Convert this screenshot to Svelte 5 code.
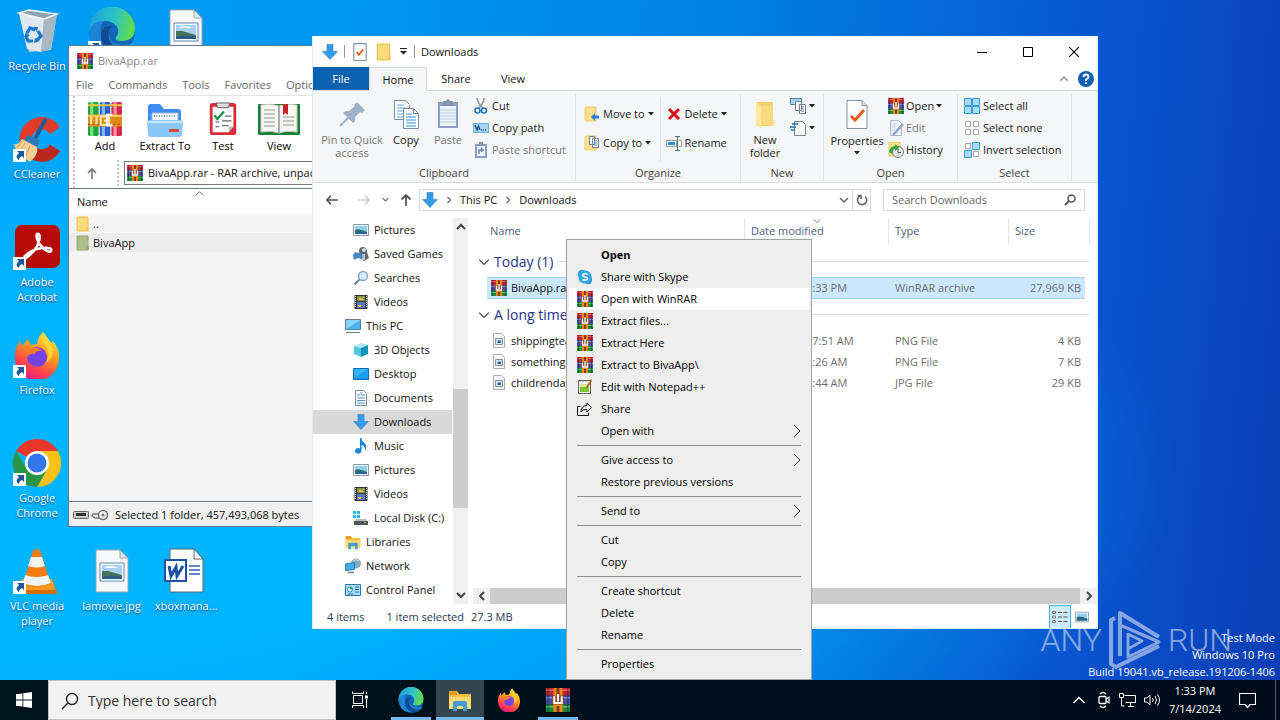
<script>
  const desktopIcons = [
    { icon: 'bin', label: 'Recycle Bin', col: 1, row: 1 },
    { icon: 'ccleaner', label: 'CCleaner', col: 1, row: 2, link: true },
    { icon: 'acrobat', label: 'Adobe Acrobat', col: 1, row: 3, link: true },
    { icon: 'firefox', label: 'Firefox', col: 1, row: 4, link: true },
    { icon: 'chrome', label: 'Google Chrome', col: 1, row: 5, link: true },
    { icon: 'vlc', label: 'VLC media player', col: 1, row: 6, link: true },
    { icon: 'edge', label: '', col: 2, row: 1, link: true },
    { icon: 'image', label: 'lamovie.jpg', col: 2, row: 6 },
    { icon: 'image', label: '', col: 3, row: 1 },
    { icon: 'word', label: 'xboxmana...', col: 3, row: 6 }
  ];
  const navItems = [
    ['pictures', 'Pictures', 1],
    ['games', 'Saved Games', 1],
    ['lens', 'Searches', 1],
    ['film', 'Videos', 1],
    ['pc', 'This PC', 0],
    ['cube', '3D Objects', 1],
    ['screen', 'Desktop', 1],
    ['doc', 'Documents', 1],
    ['down', 'Downloads', 1],
    ['music', 'Music', 1],
    ['pictures', 'Pictures', 1],
    ['film', 'Videos', 1],
    ['disk', 'Local Disk (C:)', 1],
    ['library', 'Libraries', 0],
    ['network', 'Network', 0],
    ['panel', 'Control Panel', 0]
  ];
  const oldFiles = [
    ['shippingteam.png', '10/15/2023 7:51 AM', 'PNG File', '4 KB'],
    ['somethingpage.png', '1/23/2024 2:26 AM', 'PNG File', '7 KB'],
    ['childrendays.jpg', '6/15/2024 3:44 AM', 'JPG File', '29 KB']
  ];
  const menu = [
    [
      { label: 'Open', bold: true },
      { label: 'Share with Skype', icon: 'skype' },
      { label: 'Open with WinRAR', icon: 'rar', hot: true },
      { label: 'Extract files...', icon: 'rar' },
      { label: 'Extract Here', icon: 'rar' },
      { label: 'Extract to BivaApp\\', icon: 'rar' },
      { label: 'Edit with Notepad++', icon: 'npp' },
      { label: 'Share', icon: 'share' },
      { label: 'Open with', sub: true }
    ],
    [{ label: 'Give access to', sub: true }, { label: 'Restore previous versions' }],
    [{ label: 'Send to', sub: true }],
    [{ label: 'Cut' }, { label: 'Copy' }],
    [{ label: 'Create shortcut' }, { label: 'Delete' }, { label: 'Rename' }],
    [{ label: 'Properties' }]
  ];
  const tasks = [
    { icon: 'edge', name: 'Microsoft Edge', size: 26, open: true },
    { icon: 'library', name: 'File Explorer', size: 24, open: true, active: true },
    { icon: 'firefox', name: 'Firefox', size: 24 },
    { icon: 'rar', name: 'WinRAR', size: 24, open: true }
  ];
</script>

{#snippet icon(name, size = 16)}
  {#if name === 'rar'}
    <svg width={size} height={size} viewBox="0 0 16 16" aria-hidden="true">
      <rect width="16" height="5" y="0" fill="#c2212f" /><rect width="16" height="1" y="1" fill="#f0606a" />
      <rect width="16" height="6" y="5" fill="#4450a8" /><rect width="16" height="1" y="6" fill="#7c8ce0" />
      <rect width="16" height="5" y="11" fill="#1d8a35" /><rect width="16" height="1" y="12" fill="#54c060" />
      <path d="M1 0h1v16H1zM14 0h1v16h-1z" fill="#2a2238" opacity=".5" />
      <rect x="5" width="6" height="16" fill="#e88a1c" /><path d="M7 0h2v5H7zM7 12h2v4H7z" fill="#8d3a10" />
      <rect x="4" y="5" width="8" height="6" fill="#8a4a2a" />
      <path d="M5.500 5.500v4.500h5V5.500M8 4v5" fill="none" stroke="#fff" stroke-width="1.300" />
    </svg>
  {:else if name === 'books'}
    <svg width={size} height={size} viewBox="0 0 32 32" aria-hidden="true">
      <rect x="0" width="10" height="32" rx="1.500" fill="#20a53a" /><rect x="2" width="3" height="32" fill="#79e084" />
      <rect x="11" width="10" height="32" rx="1.500" fill="#2a5fd0" /><rect x="13" width="3" height="32" fill="#82b4ff" />
      <rect x="22" width="10" height="32" rx="1.500" fill="#d22a4d" /><rect x="24" width="3" height="32" fill="#ff8ea0" />
      <path d="M0 2h10v2H0zM11 2h10v2H11zM22 2h10v2H22z" fill="#f5c93c" />
      <path d="M0 12h32v11H0z" fill="#e08a1a" /><path d="M0 12h32v2H0z" fill="#ffc95a" /><path d="M0 21h32" stroke="#96500b" stroke-dasharray="2 2" />
      <path d="M3 14v7M8 14v7" stroke="#fbe6a5" stroke-width="2" />
      <path d="M12 13.500h8v8h-8zM15 17.500h6" fill="none" stroke="#fbe6a5" stroke-width="2" /><path d="M23 12h-5v10h5" fill="none" stroke="#fff" stroke-width="2" />
    </svg>
  {:else if name === 'extract'}
    <svg width={size} height={size} viewBox="0 0 36 34" aria-hidden="true">
      <path d="M1 30V4q0-3 3-3h9l4 5h14q3 0 3 3v20z" fill="#3e8df2" />
      <path d="M5 10h26v12H5z" fill="#f5f8fc" stroke="#9eb6d4" /><path d="M7 13h22" stroke="#8499b5" stroke-width="2" stroke-dasharray="1 1.500" />
      <path d="M0 19q0-2 3-2h30q3 0 3 2l-1 12q0 3-3 3H4q-3 0-3-3z" fill="#8ac7fb" /><path d="M1 19h34" stroke="#c9e7ff" stroke-width="2" />
      <rect x="22" y="26" width="10" height="3" rx="1" fill="#e2442e" />
    </svg>
  {:else if name === 'test'}
    <svg width={size} height={size} viewBox="0 0 32 36" aria-hidden="true">
      <rect x="2" y="1" width="28" height="34" rx="3" fill="#d92d38" /><path d="M5 5h22v21l-5 6H5z" fill="#fff" />
      <path d="M27 26h-5v6z" fill="#b9bcc4" /><path d="M9 1h14l-1 5H10z" fill="#dcdde0" stroke="#55585e" />
      <path d="m7 14 3 4 7-8" fill="none" stroke="#16953c" stroke-width="2.500" />
      <path d="M18 15h7M8 21h4M15 20h10M8 26h4M15 25h7" stroke="#666b73" stroke-width="1.300" />
    </svg>
  {:else if name === 'book'}
    <svg width={size} height="34" viewBox="0 0 42 34" aria-hidden="true">
      <rect y="2" width="42" height="31" rx="1" fill="#15803c" /><path d="M3 3q10-2 18 1 8-3 18-1v27q-10-2-18 1-8-3-18-1z" fill="#f7f7f2" stroke="#c9c9c0" />
      <path d="M21 4v27" stroke="#aaa" stroke-width="2" />
      <path d="M6 8h11M6 12h11M6 16h11M6 20h11M6 24h11M25 15h11M25 19h11M25 23h11" stroke="#92958f" />
      <path d="M25 2h5v11l-2.500-2-2.500 2z" fill="#c9202d" />
    </svg>
  {:else if name === 'bin'}
    <svg width={size} height={size} viewBox="0 0 48 48" aria-hidden="true">
      <path d="m6 6 38 1-6 36-22 2z" fill="#c7d3dd" /><path d="m6 6 25 6-3 33-14-3z" fill="#dfe8ef" /><path d="m31 12 13-5-6 35-10 3z" fill="#a9b8c5" />
      <path d="m6 6 10-3 28 4-13 5z" fill="#8da2b2" stroke="#f4fafd" stroke-width="1.500" />
      <g fill="none" stroke="#1677cc" stroke-width="3.200"><path d="m14 26 3-5 5 2M25 24l3 5-4 4M20 34h-5l-2-5" /></g>
      <path d="M20 20h5l-1 5zM27 34l-6 2 1-5zM11 30l2-5 4 4z" fill="#1677cc" />
    </svg>
  {:else if name === 'ccleaner'}
    <svg width={size} height={size} viewBox="0 0 48 48" aria-hidden="true">
      <path d="M47 12A22 22 0 1 0 47 36L37 30A10 10 0 1 1 37 19z" fill="#e13b2b" /><path d="M47 36 37 30A10 10 0 0 1 24 33L18 44Q36 53 47 36z" fill="#b9271d" />
      <path d="m32 5-9 17" stroke="#1d5e98" stroke-width="4" stroke-linecap="round" />
      <path d="m15 20 12 5-4 9-14-7z" fill="#2e78b4" /><path d="m9 24 15 8q2 7-7 15L4 38l-3-9q5 1 8-5z" fill="#f6cf93" /><path d="m12 28-6 10M17 31l-5 12M9 26l-5 7" stroke="#d59c55" />
    </svg>
  {:else if name === 'acrobat'}
    <svg width={size} height={size} viewBox="0 0 48 48" aria-hidden="true">
      <rect x="2" y="2" width="45" height="43" rx="7" fill="#b60c05" />
      <path d="M24 11q4-1 2 7-2 9-13 17-3 1-1-2 5-6 17-8 11-1 9 3-2 2-7-2Q22 17 24 11z" fill="none" stroke="#fff" stroke-width="2.600" stroke-linejoin="round" />
    </svg>
  {:else if name === 'firefox'}
    <svg width={size} height={size} viewBox="0 0 48 48" aria-hidden="true">
      <defs><linearGradient id="fx" x1=".8" y1="0" x2=".3" y2="1"><stop offset="0" stop-color="#fff044" /><stop offset=".4" stop-color="#ff9a1f" /><stop offset=".75" stop-color="#ff4050" /><stop offset="1" stop-color="#e31587" /></linearGradient></defs>
      <path d="M30 1q4 5 8 11l2-2q7 9 6 18A22 22 0 0 1 2 27Q1 18 7 10l2 5 6-7 3 6 6-1q1-7 6-12z" fill="url(#fx)" />
      <circle cx="24" cy="26" r="10" fill="#7542e5" /><path d="M15 18q8-3 14 1-6 1-8 4-4-1-7 3z" fill="#ff7a20" /><path d="M30 1q-3 7 2 13 6 8 1 18 8-5 7-14-2-8-7-12z" fill="#ffd933" opacity=".85" />
    </svg>
  {:else if name === 'chrome'}
    <svg width={size} height={size} viewBox="0 0 48 48" aria-hidden="true">
      <path d="M24 24 3.200 12a24 24 0 0 1 41.600 0z" fill="#e8382b" /><path d="M24 24V12h20.800A24 24 0 0 1 24 48l10.400-18z" fill="#fdc215" /><path d="M24 24l10.400 6L24 48A24 24 0 0 1 3.200 12L13.600 30z" fill="#289645" />
      <circle cx="24" cy="24" r="12" fill="#fff" /><circle cx="24" cy="24" r="9.500" fill="#3477ea" />
    </svg>
  {:else if name === 'vlc'}
    <svg width={size} height={size} viewBox="0 0 48 48" aria-hidden="true">
      <path d="M9 32h30l5 14H4z" fill="#ff9a1b" /><path d="M5 43h38l1 4H4z" fill="#d96c00" />
      <path d="M20 4q4-4 7 0l11 33q-14 6-28 0z" fill="#f47b0c" /><path d="m18 10 11 0 3 9q-8 3-17 0zM12 28q12 4 23 0l3 8q-14 6-28 0z" fill="#f1f1f1" />
    </svg>
  {:else if name === 'edge'}
    <svg width={size} height={size} viewBox="0 0 48 48" aria-hidden="true">
      <defs><linearGradient id="eg" x1="0" y1=".3" x2="1" y2=".5"><stop offset="0" stop-color="#1b9de2" /><stop offset=".55" stop-color="#2fc5c4" /><stop offset="1" stop-color="#63dc45" /></linearGradient></defs>
      <circle cx="24" cy="24" r="23" fill="#1265b8" />
      <path d="M1 24A23 23 0 0 1 47 21q0 13-14 13-7 0-5-4 3-3 2-8-3-8-13-8-11 0-16 10z" fill="url(#eg)" />
      <path d="M1 24q4-11 16-10-6 4-4 15 3 13 16 18Q4 49 1 24z" fill="#1b84d4" /><path d="M25 19q-7 4-4 13 5 10 23 7-6 9-17 8-14-6-14-17 0-12 12-11z" fill="#0d4a91" />
      <path d="M21 25q-1 13 15 13 5 0 9-2 1 2-1 4-18 6-23-8z" fill="#30b4e8" opacity=".5" />
    </svg>
  {:else if name === 'image'}
    <svg width={size} height={size} viewBox="0 0 48 48" aria-hidden="true">
      <path d="M8 3h24l8 8v34H8z" fill="#f7f8f9" stroke="#9aa6ae" /><path d="M32 3v8h8z" fill="#dfe5e9" stroke="#9aa6ae" />
      <path d="M12 16h24v18H12z" fill="#fff" stroke="#5b86b4" /><path d="M14 18h20v14H14z" fill="#a8d2f4" /><path d="M14 24l6 0 14 4v4H14z" fill="#49725c" /><path d="M14 30q10-3 20 0v2H14z" fill="#2b5b86" /><path d="M16 21q6-4 14 0z" fill="#fff" />
    </svg>
  {:else if name === 'word'}
    <svg width={size} height={size} viewBox="0 0 48 48" aria-hidden="true">
      <path d="M8 2h24l9 10v33H8z" fill="#fff" stroke="#60656b" /><path d="M32 2v10h9" fill="none" stroke="#60656b" />
      <path d="M27 19h11M27 23h11M27 27h11" stroke="#2b5cb0" stroke-width="1.500" /><rect x="3" y="13" width="21" height="21" fill="#fff" stroke="#1e50a4" stroke-width="2" />
      <path d="m7 19 2 10 5-9 1 9 6-10" fill="none" stroke="#1e50a4" stroke-width="3" />
    </svg>
  {:else if name === 'folder'}
    <svg width={size} height={size} viewBox="0 0 16 16" aria-hidden="true"><path d="M2 1h11v14H2z" fill="#fbdc7c" stroke="#e9c14f" /><path d="M11 11h3v4h-3z" fill="#f3c95a" /></svg>
  {:else if name === 'folder-green'}
    <svg width={size} height={size} viewBox="0 0 16 16" aria-hidden="true"><path d="M2 1h11v14H2z" fill="#adbd8b" stroke="#96a878" /><path d="M11 11h3v4h-3z" fill="#9aae7a" /></svg>
  {:else if name === 'pictures'}
    <svg width={size} height={size} viewBox="0 0 16 16" aria-hidden="true"><path d="M.5 2.500h15v11H.5z" fill="#fff" stroke="#8b98a6" /><path d="M2 4h12v8H2z" fill="#8fd0f4" /><path d="M2 8q4-2 12 2v2H2z" fill="#356d7e" /><path d="M2 10h12v2H2z" fill="#2a62a0" /></svg>
  {:else if name === 'games'}
    <svg width={size} height={size} viewBox="0 0 16 16" aria-hidden="true"><path d="M6 5q0-4 4-4t4 5l2 6-5 3-4-3z" fill="#5d6b78" /><circle cx="11" cy="4" r="2" fill="#cfd7dd" /><path d="M0 9q2-5 5-2l3 0v6l-3-1-4 2z" fill="#418bc4" /><path d="M9 8h3v6H9z" fill="#b5bfc8" /></svg>
  {:else if name === 'lens'}
    <svg width={size} height={size} viewBox="0 0 16 16" aria-hidden="true"><circle cx="10" cy="6" r="4.500" fill="#d6efff" stroke="#7fa5c4" stroke-width="1.300" /><path d="m6.500 9.500-5 5" stroke="#5f86ab" stroke-width="2" /></svg>
  {:else if name === 'film'}
    <svg width={size} height={size} viewBox="0 0 16 16" aria-hidden="true"><path d="M1.500 1h13v14h-13z" fill="#34363a" /><path d="M4 2h8v5H4z" fill="#8a9444" /><path d="M4 8h8v6H4z" fill="#5c7ac0" /><path d="M6 4h4v2H6zM5 11h3v2H5z" fill="#e0c44a" /><path d="M2.500 2v12M13.500 2v12" stroke="#eee" stroke-dasharray="1 1" /></svg>
  {:else if name === 'pc'}
    <svg width={size} height={size} viewBox="0 0 16 16" aria-hidden="true"><path d="M.5 1.500h15v10H.5z" fill="#4bb8f5" stroke="#5a7d99" /><path d="m1 2 14 0L1 11z" fill="#8ad5fb" /><path d="M1 14.500h14" stroke="#6e7f8c" stroke-width="1" /></svg>
  {:else if name === 'cube'}
    <svg width={size} height={size} viewBox="0 0 16 16" aria-hidden="true"><path d="m1 4 7-3 7 2-7 3z" fill="#a7eaf5" /><path d="m1 4 7 2v9L1 12z" fill="#4dc8de" /><path d="m8 6 7-3v9l-7 3z" fill="#1494b3" /></svg>
  {:else if name === 'screen'}
    <svg width={size} height={size} viewBox="0 0 16 16" aria-hidden="true"><path d="M.5 2.500h15v11H.5z" fill="#1c9df0" stroke="#1068ae" /><path d="M1 3h14L1 12z" fill="#37b3fa" /></svg>
  {:else if name === 'doc'}
    <svg width={size} height={size} viewBox="0 0 16 16" aria-hidden="true"><path d="M2.500.5h8l3 3v12h-11z" fill="#fff" stroke="#78899a" /><path d="M4 5h3M4 8h8M4 10.500h8M4 13h8M8 5h4M7 3h2" stroke="#4a90c8" /></svg>
  {:else if name === 'down'}
    <svg width={size} height={size} viewBox="0 0 16 16" aria-hidden="true"><path d="M5 .5h6v7h4.500L8 15.500.5 7.500H5z" fill="#359be8" stroke="#2b7fc4" stroke-width=".6" /></svg>
  {:else if name === 'music'}
    <svg width={size} height={size} viewBox="0 0 16 16" aria-hidden="true"><path d="M7 0h1.500q0 3 3 5 3 3 1 8 0-5-4-6v6a3.300 2.800 0 1 1-1.500-2.500z" fill="#1689da" /></svg>
  {:else if name === 'disk'}
    <svg width={size} height={size} viewBox="0 0 16 16" aria-hidden="true"><path d="M0 1h3v3H0zM4 1h3v3H4zM0 5h3v3H0zM4 5h3v3H4z" fill="#27b5e0" /><path d="M3 9h10l2 3H1z" fill="#b9bfc4" /><path d="M1 11h14v4H1z" fill="#51575c" /><path d="M11 12h2v1h-2z" fill="#63e04b" /></svg>
  {:else if name === 'library'}
    <svg width={size} height={size} viewBox="0 0 24 24" aria-hidden="true"><path d="M1 20V4q0-1 1-1h7l2 3h12v14z" fill="#f6c03c" /><path d="M1 9h22v12H1z" fill="#fddb74" /><path d="M1 3.500h8V7H1z" fill="#e79a1f" /><path d="M5 23v-8q0-2 2-2h10q2 0 2 2v8h-4v-5H9v5z" fill="#3f9ad6" /></svg>
  {:else if name === 'network'}
    <svg width={size} height={size} viewBox="0 0 16 16" aria-hidden="true"><circle cx="11" cy="5.500" r="5" fill="#85a9c5" /><path d="M8 3q3-3 6 0" stroke="#dcebf5" fill="none" /><path d="m.5 6 9-1.500v7l-9 1z" fill="#3fb0f0" stroke="#3a78a6" /><path d="M3 14.500h6" stroke="#73838f" stroke-width="1.500" /></svg>
  {:else if name === 'panel'}
    <svg width={size} height={size} viewBox="0 0 16 16" aria-hidden="true"><path d="M.5 2.500h15v11H.5z" fill="#a9dcf8" stroke="#2878ae" /><circle cx="5" cy="7.500" r="2.500" fill="#fff" stroke="#2485c0" /><path d="M5 7.500V5a2.500 2.500 0 0 1 2.500 2.500z" fill="#2d9e50" /><path d="M10 5h4M10 7.500h4M10 10h4M3 12h5" stroke="#2574a8" /></svg>
  {:else if name === 'picfile'}
    <svg width={size} height={size} viewBox="0 0 16 16" aria-hidden="true"><path d="M2.500.5h8l3 3v11h-11z" fill="#fafbfc" stroke="#a3adb5" /><path d="M4.500 5.500h7v6h-7z" fill="#d7e8f6" stroke="#7c93a8" /><path d="M6.500 7.500h3.500v2.500H6.500z" fill="#3d6787" /></svg>
  {:else if name === 'skype'}
    <svg width={size} height={size} viewBox="0 0 16 16" aria-hidden="true"><circle cx="5" cy="5" r="4.200" fill="#35a5ea" /><circle cx="11" cy="11" r="4.200" fill="#2a95e0" /><circle cx="8" cy="8" r="6.600" fill="#35a5ea" /><path d="M10.500 5.500Q8 4 6 5.500q-1 2 2 2.500 3 .500 2.500 2-2 2-5 .500" fill="none" stroke="#fff" stroke-width="1.600" /></svg>
  {:else if name === 'npp'}
    <svg width={size} height={size} viewBox="0 0 16 16" aria-hidden="true"><path d="M1.500 1.500h12v13h-12z" fill="#f8faf2" stroke="#5d665a" /><path d="M3 8h9v5H3z" fill="#7fc62e" /><path d="M3 5h9v3H3z" fill="#cfe99a" /><path d="m14.500 1-5 8" stroke="#b5651d" stroke-width="1.800" /><path d="M3 1v2M6 1v2M9 1v2" stroke="#777" /></svg>
  {:else if name === 'share'}
    <svg width={size} height={size} viewBox="0 0 16 16" aria-hidden="true"><path d="M3.500 5.500h-3v9h11V12M4 11q0-6 6-6.500V2l4.500 4.500L10 11V8.500Q6 8 4 11z" fill="none" stroke="#111" /></svg>
  {:else if name === 'pin'}
    <svg width={size} height={size} viewBox="0 0 32 32" aria-hidden="true"><path d="m18 7 3-3 8 8-3 3-2-1-5 5q1 4-2 6l-10-10q3-3 6-2l6-5z" fill="#9eb2c6" /><path d="m12 20-8 8" stroke="#9eb2c6" stroke-width="2" /></svg>
  {:else if name === 'copy'}
    <svg width={size} height={size} viewBox="0 0 32 32" aria-hidden="true"><path d="M4.500 2.500h11l4 4v15h-15z" fill="#fff" stroke="#7c8da0" /><path d="M7 7h7M7 10h10M7 13h10M7 16h10M7 19h10" stroke="#5fa7e2" /><path d="M13.500 10.500h10l5 5v15h-15z" fill="#fff" stroke="#7c8da0" /><path d="M23.500 10.500v5h5" fill="none" stroke="#7c8da0" /><path d="M16 16h6M16 19h10M16 22h10M16 25h10M16 28h10" stroke="#2f8de0" /></svg>
  {:else if name === 'paste'}
    <svg width={size} height={size} viewBox="0 0 32 32" aria-hidden="true"><path d="M6 4h20v26H6z" fill="#8b9fc4" /><path d="M8 8h16v20H8z" fill="#eef4fb" /><path d="M8 12h16M8 15h16M8 18h16M8 21h16M8 24h16" stroke="#bccde4" /><path d="M11 3h3q2-4 4 0h3v5H11z" fill="#8494ac" /></svg>
  {:else if name === 'cut'}
    <svg width={size} height={size} viewBox="0 0 16 16" aria-hidden="true"><path d="M4 0q1 6 6 10M11 0q0 5-5 10" fill="none" stroke="#8b98a6" stroke-width="1.600" /><circle cx="4.500" cy="12.500" r="2.500" fill="none" stroke="#2176b8" stroke-width="1.600" /><circle cx="11" cy="12.500" r="2.500" fill="none" stroke="#2176b8" stroke-width="1.600" /></svg>
  {:else if name === 'copypath'}
    <svg width={size} height={size} viewBox="0 0 16 16" aria-hidden="true"><path d="M.5 3.500h15v9H.5z" fill="#a9d6f8" stroke="#6baede" /><path d="m2 5 2 5 1.500-4L7 10M8 10h1M10 10h1M12 10h1" fill="none" stroke="#12467a" stroke-width="1.300" /></svg>
  {:else if name === 'pasteshort'}
    <svg width={size} height={size} viewBox="0 0 16 16" aria-hidden="true"><path d="M2 2h12v14H2z" fill="#8b9fc4" /><path d="M4 4h8v10H4z" fill="#eef4fb" /><path d="M6 0h4v3H6z" fill="#8494ac" /><path d="M6 12V8h4M8 6l2 2-2 2" fill="none" stroke="#6f83aa" stroke-width="1.500" /></svg>
  {:else if name === 'moveto'}
    <svg width={size} height={size} viewBox="0 0 16 16" aria-hidden="true"><path d="M1 1h11v14H1z" fill="#fbdf8e" stroke="#eccb6c" /><path d="m7 11 4-4v2.500h4v3h-4V15z" fill="#2c7fdc" /></svg>
  {:else if name === 'copyto'}
    <svg width={size} height={size} viewBox="0 0 16 16" aria-hidden="true"><path d="M1 1h11v14H1z" fill="#fbdf8e" stroke="#eccb6c" /><path d="M5.500 1.500h5v8h-5zM8.500 3.500h6v9h-6z" fill="#fff" stroke="#6b7f96" /><path d="M10 6h3M10 8h3M10 10h3" stroke="#3c8edb" /></svg>
  {:else if name === 'delete'}
    <svg width={size} height={size} viewBox="0 0 16 16" aria-hidden="true"><path d="m3 3 10 10M13 3 3 13" stroke="#d8121d" stroke-width="3" /></svg>
  {:else if name === 'rename'}
    <svg width={size} height={size} viewBox="0 0 16 16" aria-hidden="true"><path d="M.5 5.500h10v6H.5zM13 5.500h2.500v6H13" fill="#fff" stroke="#8a99a8" /><path d="M2 7h7v3H2z" fill="#2f8ad6" /><path d="M9 1.500h5M9 15.500h5M11.500 2v13" stroke="#5b6873" /></svg>
  {:else if name === 'newfolder'}
    <svg width={size} height={size} viewBox="0 0 32 32" aria-hidden="true"><path d="M7 4h17v24H7z" fill="#f5d06d" /><path d="M7 4l5 4v22l-5-3zM24 22l2 1v5h-4z" fill="#fbe6a2" /><path d="M12 8h12v19H12z" fill="#f9da80" /></svg>
  {:else if name === 'newitem'}
    <svg width={size} height={size} viewBox="0 0 16 16" aria-hidden="true"><path d="M.5.5h11v6H.5z" fill="#a7d4f6" stroke="#56809f" /><path d="M5.500 3.500h6v9h-6zM9.500 6.500h6v9h-6z" fill="#f6f8fa" stroke="#76838f" /><path d="M11 9h3M11 11h3M11 13h3" stroke="#76838f" /></svg>
  {:else if name === 'easy'}
    <svg width={size} height={size} viewBox="0 0 16 16" aria-hidden="true"><path d="M4.500 1.500h8l3 3v11h-11z" fill="#f8fafb" stroke="#76838f" /><path d="M2 4h6M0 7h6M1 10h4" stroke="#1f6fb4" stroke-width="1.500" /></svg>
  {:else if name === 'check'}
    <svg width={size} height={size} viewBox="0 0 32 32" aria-hidden="true"><path d="M6 2.500h15l5 5v23H6z" fill="#fff" stroke="#8592a0" /><path d="M21 2.500v5h5" fill="#dbe2e8" stroke="#8592a0" /><path d="m10 18 4 4 9-10" fill="none" stroke="#ec5a1c" stroke-width="3" /></svg>
  {:else if name === 'checklist'}
    <svg width={size} height={size} viewBox="0 0 16 16" aria-hidden="true"><path d="M2.500.5h11v15h-11z" fill="#fff" stroke="#8592a0" /><path d="m5 8 2 2.500 4-5" fill="none" stroke="#ec5a1c" stroke-width="1.600" /></svg>
  {:else if name === 'edit'}
    <svg width={size} height={size} viewBox="0 0 16 16" aria-hidden="true"><path d="M2.500.5h8l3 3v12h-11z" fill="#eef3f9" stroke="#a6b6c8" /><path d="M4 4h5M4 7h4M4 10h3" stroke="#b9cbdd" /><path d="m15 4-8 9-2 2" stroke="#8ea6c2" stroke-width="2.500" /></svg>
  {:else if name === 'history'}
    <svg width={size} height={size} viewBox="0 0 16 16" aria-hidden="true"><path d="M1 0h11v14H1z" fill="#f7e487" stroke="#e1c95c" /><circle cx="10" cy="10" r="5.500" fill="#e5e9ea" stroke="#6e7b80" /><path d="M10 7v3.500h3" fill="none" stroke="#555" /><path d="M1 10q1-6 6-6v-2l4 4-4 3V7q-3 0-3 5z" fill="#3ba13a" /></svg>
  {:else if name === 'selall'}
    <svg width={size} height={size} viewBox="0 0 16 16" aria-hidden="true"><path d="M.5.5h7v7h-7zM8.500.5h7v7h-7zM.5 8.500h7v7h-7zM8.500 8.500h7v7h-7z" fill="#a8dafb" stroke="#3f97d3" /></svg>
  {:else if name === 'selnone'}
    <svg width={size} height={size} viewBox="0 0 16 16" aria-hidden="true"><path d="M1.500 1.500h5v5h-5zM9.500 1.500h5v5h-5zM1.500 9.500h5v5h-5zM9.500 9.500h5v5h-5z" fill="#fff" stroke="#a9a5ae" /></svg>
  {:else if name === 'selinv'}
    <svg width={size} height={size} viewBox="0 0 16 16" aria-hidden="true"><path d="M1.500 1.500h5v5h-5zM9.500 9.500h5v5h-5z" fill="#fff" stroke="#a9a5ae" /><path d="M8.500.5h7v7h-7zM.5 8.500h7v7h-7z" fill="#a8dafb" stroke="#3f97d3" /></svg>
  {/if}
{/snippet}

{#snippet chevron(dir, size = 9, weight = 1.5)}
  <svg class="chev {dir}" width={size} height={size} viewBox="0 0 10 10" aria-hidden="true"><path d="m1 3 4 4 4-4" fill="none" stroke="currentColor" stroke-width={weight} /></svg>
{/snippet}

{#snippet tri()}
  <svg width="6" height="4" viewBox="0 0 6 4" aria-hidden="true"><path d="M0 0h6L3 3.500z" fill="#222" /></svg>
{/snippet}

<div class="screen">
  <main class="desktop">
    <ul class="icons">
      {#each desktopIcons as d}
        <li style:grid-area="{d.row} / {d.col}">
          <span class="pic">
            {@render icon(d.icon, 48)}
            {#if d.link}
              <svg class="arrow" width="13" height="13" viewBox="0 0 13 13" aria-hidden="true"><path d="M0 0h13v13H0z" fill="#fff" /><path d="M4 2h7v7L9 7q-3 1-3 4-5-3 0-7z" fill="#1f5796" /></svg>
            {/if}
          </span>
          <span>{d.label}</span>
        </li>
      {/each}
    </ul>

    <section class="window winrar" aria-label="BivaApp.rar">
      <header class="wr-title">{@render icon('rar', 16)}<span>BivaApp.rar</span></header>
      <nav class="wr-menu">
        <button>File</button><button>Commands</button><button>Tools</button><button>Favorites</button><button>Options</button>
      </nav>
      <div class="wr-tools">
        <button>{@render icon('books', 34)}Add</button>
        <button>{@render icon('extract', 36)}Extract To</button>
        <button>{@render icon('test', 34)}Test</button>
        <button>{@render icon('book', 42)}View</button>
      </div>
      <div class="wr-addr">
        <button class="wr-up" aria-label="Up one level">
          <svg width="12" height="12" viewBox="0 0 12 12" aria-hidden="true"><path d="M6 12V2M2 6l4-4 4 4" fill="none" stroke="#777" stroke-width="1.600" /></svg>
        </button>
        <label class="wr-path">{@render icon('rar', 16)}<input aria-label="Path" readonly value="BivaApp.rar - RAR archive, unpacked size" /></label>
      </div>
      <div class="wr-list">
        <div class="wr-head">Name<span class="wr-sort">{@render chevron('up', 9, 1)}</span></div>
        <div class="wr-row">{@render icon('folder', 16)}..</div>
        <div class="wr-row sel">{@render icon('folder-green', 16)}BivaApp</div>
      </div>
      <footer class="wr-status">
        <svg width="36" height="12" viewBox="0 0 36 12" aria-hidden="true"><rect x=".5" y="2.500" width="15" height="7" rx="1" fill="#ccc" stroke="#666" /><path d="M3 4h10v3H3z" fill="#333" /><circle cx="30" cy="6" r="4.500" fill="#eee" stroke="#777" stroke-width="1.500" /><circle cx="30" cy="6" r="1.500" fill="#777" /><path d="M26 5h-6l-1 2 3 2h4" fill="none" stroke="#777" stroke-width="1.500" /></svg>
        <span>Selected 1 folder, 457,493,068 bytes</span>
      </footer>
    </section>

    <section class="window explorer" aria-label="Downloads">
      <header class="title">
        {@render icon('down', 16)}
        <i class="bar"></i>
        {@render icon('checklist', 18)}
        {@render icon('folder', 18)}
        <svg width="9" height="7" viewBox="0 0 9 7" aria-hidden="true"><path d="M1 .5h7" stroke="#222" /><path d="M1 3h7L4.500 6.500z" fill="#222" /></svg>
        <i class="bar"></i>
        <span>Downloads</span>
        <div class="caption">
          <button aria-label="Minimize"><svg width="10" height="10" viewBox="0 0 10 10"><path d="M0 5.500h10" stroke="#000" /></svg></button>
          <button aria-label="Maximize"><svg width="10" height="10" viewBox="0 0 10 10"><path d="M.5.5h9v9h-9z" fill="none" stroke="#000" /></svg></button>
          <button aria-label="Close"><svg width="10" height="10" viewBox="0 0 10 10"><path d="m0 0 10 10M10 0 0 10" stroke="#000" stroke-width="1.200" /></svg></button>
        </div>
      </header>
      <nav class="tabs">
        <button class="file">File</button><button class="on">Home</button><button>Share</button><button>View</button>
        <span class="tabend">{@render chevron('up', 10)}<svg width="16" height="16" viewBox="0 0 16 16" aria-hidden="true"><circle cx="8" cy="8" r="8" fill="#0f60b0" /><path d="M5.500 6q0-2.500 2.500-2.500T10.500 6Q10.500 7.300 8 8.500V10M8 11.200v1.800" fill="none" stroke="#fff" stroke-width="1.800" /></svg></span>
      </nav>
      <div class="ribbon">
        <div class="group">
          <div class="tools clip">
            <button class="big off">{@render icon('pin', 32)}Pin to Quick access</button>
            <button class="big">{@render icon('copy', 32)}Copy</button>
            <button class="big off">{@render icon('paste', 32)}Paste</button>
            <div class="stack">
              <button>{@render icon('cut')}Cut</button>
              <button>{@render icon('copypath')}Copy path</button>
              <button class="off">{@render icon('pasteshort')}Paste shortcut</button>
            </div>
          </div>
          <p>Clipboard</p>
        </div>
        <div class="group">
          <div class="tools org">
            <div class="stack">
              <button>{@render icon('moveto')}Move to {@render tri()}</button>
              <button>{@render icon('copyto')}Copy to {@render tri()}</button>
            </div>
            <div class="stack">
              <button>{@render icon('delete')}Delete {@render tri()}</button>
              <button>{@render icon('rename')}Rename</button>
            </div>
          </div>
          <p>Organize</p>
        </div>
        <div class="group">
          <div class="tools new">
            <button class="big">{@render icon('newfolder', 32)}New folder</button>
            <div class="stack">
              <button aria-label="New item">{@render icon('newitem')}{@render tri()}</button>
              <button aria-label="Easy access">{@render icon('easy')}{@render tri()}</button>
            </div>
          </div>
          <p>New</p>
        </div>
        <div class="group">
          <div class="tools opn">
            <button class="big">{@render icon('check', 32)}Properties{@render tri()}</button>
            <div class="stack">
              <button>{@render icon('rar')}Open {@render tri()}</button>
              <button class="off">{@render icon('edit')}Edit</button>
              <button>{@render icon('history')}History</button>
            </div>
          </div>
          <p>Open</p>
        </div>
        <div class="group">
          <div class="tools slc">
            <div class="stack">
              <button>{@render icon('selall')}Select all</button>
              <button>{@render icon('selnone')}Select none</button>
              <button>{@render icon('selinv')}Invert selection</button>
            </div>
          </div>
          <p>Select</p>
        </div>
      </div>
      <div class="addr">
        <div class="arrows">
          <button aria-label="Back"><svg width="12" height="12" viewBox="0 0 12 12"><path d="M12 6H1M5 1.500.800 6 5 10.500" fill="none" stroke="#555" stroke-width="1.600" /></svg></button>
          <button aria-label="Forward"><svg width="12" height="12" viewBox="0 0 12 12"><path d="M0 6h11M7 1.500 11.200 6 7 10.500" fill="none" stroke="#ccc" stroke-width="1.600" /></svg></button>
          <button aria-label="Recent">{@render chevron('down', 7)}</button>
          <button aria-label="Up"><svg width="12" height="12" viewBox="0 0 12 12"><path d="M6 12V1M1.500 5.500 6 1l4.500 4.500" fill="none" stroke="#555" stroke-width="1.800" /></svg></button>
        </div>
        <div class="crumbs">
          {@render icon('down', 16)}{@render chevron('right', 8)}<a href="#pc">This PC</a>{@render chevron('right', 8)}<a href="#downloads">Downloads</a>
          <span class="drop">{@render chevron('down', 10)}</span>
          <button class="reload" aria-label="Refresh"><svg width="12" height="12" viewBox="0 0 12 12"><path d="M9 2.500A4.600 4.600 0 1 1 4 2M1.500 1.500H5V5" fill="none" stroke="#666" stroke-width="1.600" /></svg></button>
        </div>
        <label class="search"><input type="search" aria-label="Search Downloads" placeholder="Search Downloads" /><svg width="12" height="12" viewBox="0 0 12 12" aria-hidden="true"><circle cx="7.500" cy="4.500" r="3.500" fill="none" stroke="#555" stroke-width="1.500" /><path d="M5 7 1 11" stroke="#555" stroke-width="2" /></svg></label>
      </div>
      <div class="body">
        <ul class="nav">
          {#each navItems as [ic, label, level]}
            <li class:deep={level === 1} class:on={label === 'Downloads'}>{@render icon(ic)}{label}</li>
          {/each}
        </ul>
        <div class="vbar"><span>{@render chevron('up', 10, 2)}</span><i></i><span>{@render chevron('down', 10, 2)}</span></div>
        <div class="pane">
          <table>
            <colgroup><col class="c0" /><col /><col class="c2" /><col class="c3" /><col class="c4" /><col class="c5" /></colgroup>
            <thead>
              <tr><th></th><th class="line">Name</th><th class="line date">Date modified<span class="sort">{@render chevron('down', 8, 1)}</span></th><th class="line">Type</th><th>Size</th><th class="line"></th></tr>
            </thead>
            <tbody>
              <tr class="grp first"><td colspan="6"><div>{@render chevron('down', 12, 1)}<span>Today (1)</span><hr /></div></td></tr>
              <tr class="sel"><td></td><td class="name"><span>{@render icon('rar', 16)}BivaApp.rar</span></td><td class="mod">7/14/2024 1:33 PM</td><td>WinRAR archive</td><td class="num">27,969 KB</td><td></td></tr>
              <tr class="grp"><td colspan="6"><div>{@render chevron('down', 12, 1)}<span>A long time ago (3)</span><hr /></div></td></tr>
              {#each oldFiles as [n, m, t, s]}
                <tr><td></td><td class="name"><span>{@render icon('picfile', 16)}{n}</span></td><td class="mod">{m}</td><td>{t}</td><td class="num">{s}</td><td></td></tr>
              {/each}
            </tbody>
          </table>
          <div class="hbar"><span>{@render chevron('left', 10, 2)}</span><i></i><span>{@render chevron('right', 10, 2)}</span></div>
        </div>
      </div>
      <footer class="status">
        <span>4 items</span><span>1 item selected</span><span>27.3 MB</span>
        <div class="views">
          <button class="on" aria-label="Details view"><svg width="16" height="16" viewBox="0 0 16 16"><path d="M.5 2.500h3v2h-3zM.5 7h3v2h-3zM.5 11.500h3v2h-3z" fill="#fff" stroke="#777" /><path d="M6 3.500h4M6 8h4M6 12.500h4M11.500 3.500h4M11.500 8h4M11.500 12.500h4" stroke="#555" /></svg></button>
          <button aria-label="Large icons view">{@render icon('pictures', 14)}</button>
        </div>
      </footer>
    </section>

    <div class="anyrun"><span>ANY</span><svg width="54" height="60" viewBox="0 0 54 60" aria-hidden="true"><g fill="none" stroke="#fff" stroke-width="4" stroke-linejoin="round"><path d="M7 8 3 10v44l5 3 43-21" /><path d="M12 46V3l39 24" /><path d="m12 15 39 17-31 15V24l14 7-14 8" stroke-width="3" /></g></svg><span>RUN</span></div>
    <p class="build"><span>Test Mode</span><span>Windows 10 Pro</span><span>Build 19041.vb_release.191206-1406</span></p>
  </main>

  <div class="context" role="menu">
    {#each menu as section}
      <div class="section">
        {#each section as m}
          <button role="menuitem" class:bold={m.bold} class:hot={m.hot}>
            <span class="mi">{#if m.icon}{@render icon(m.icon, 16)}{/if}</span>{m.label}
            {#if m.sub}<svg class="sub" width="8" height="14" viewBox="0 0 8 14" aria-hidden="true"><path d="m1 1 6 6-6 6" fill="none" stroke="#333" /></svg>{/if}
          </button>
        {/each}
      </div>
    {/each}
  </div>

  <footer class="taskbar">
    <button class="start" aria-label="Start"><svg width="16" height="16" viewBox="0 0 16 16"><path d="M0 2.300 6.500 1.400v6.100H0zM7.300 1.300 16 0v7.500H7.300zM0 8.400h6.500v6.200L0 13.700zM7.300 8.400H16V16l-8.700-1.300z" fill="#fff" /></svg></button>
    <label class="find"><svg width="18" height="18" viewBox="0 0 18 18" aria-hidden="true"><circle cx="11" cy="7" r="5.500" fill="none" stroke="#222" stroke-width="1.400" /><path d="m7 11-6 6" stroke="#222" stroke-width="1.400" /></svg><input type="search" aria-label="Type here to search" placeholder="Type here to search" /></label>
    <button class="task" aria-label="Task View"><svg width="18" height="18" viewBox="0 0 18 18"><path d="M2.500 4.500h9v8h-9zM1.500.5v2h11v-2M1.500 17v-2.500h11V17M15.500 1v2M15.500 8v9" fill="none" stroke="#fff" /><path d="M14 4.500h3v3h-3z" fill="#fff" /></svg></button>
    {#each tasks as t}
      <button class="task" class:open={t.open} class:active={t.active} aria-label={t.name}>{@render icon(t.icon, t.size)}</button>
    {/each}
    <div class="tray">
      <svg width="12" height="8" viewBox="0 0 12 8" aria-hidden="true"><path d="m.5 7 5.500-5.500L11.500 7" fill="none" stroke="#fff" stroke-width="1.300" /></svg>
      <svg width="14" height="18" viewBox="0 0 14 18" aria-hidden="true"><rect x="2" y="5.500" width="7" height="7" rx="1" fill="none" stroke="#fff" stroke-width="1.300" /><path d="m9 8 3-2v6l-3-2M3 3q3-3 6 0M3 15q3 3 6 0" fill="none" stroke="#fff" stroke-width="1.200" /></svg>
      <svg width="17" height="16" viewBox="0 0 17 16" aria-hidden="true"><path d="M5.500 3.500h11v7h-10M9 14.500h6M11.500 11v3M.5 1.500h4v4h-4zM2.500 6v8h3" fill="none" stroke="#fff" /></svg>
      <svg width="17" height="14" viewBox="0 0 17 14" aria-hidden="true"><path d="M.5 5v4h2.500l3 3V2L3 5zM8.500 5q1.500 2 0 4M11 3q3 4 0 8M13.500 1.500q4 5.500 0 11" fill="none" stroke="#fff" /></svg>
      <time><span>1:33 PM</span><span>7/14/2024</span></time>
      <svg width="17" height="17" viewBox="0 0 17 17" aria-hidden="true"><path d="M.5 1.500h16v11H11l-2.500 3-2.500-3H.5z" fill="none" stroke="#fff" stroke-width="1.200" /></svg>
    </div>
  </footer>
</div>

<style>
  :global(body) { margin: 0; font-family: 'Open Sans', 'Noto Sans', sans-serif; font-size: 11px; line-height: 16px; color: #111; overflow: hidden; }
  * { box-sizing: border-box; }
  button, input { font: inherit; color: inherit; border: 0; background: none; padding: 0; margin: 0; outline: 0; }
  button { white-space: nowrap; }
  ul, p { list-style: none; margin: 0; padding: 0; }
  svg { display: block; flex: none; }
  a { color: inherit; text-decoration: none; }

  .screen { position: relative; height: 100vh; display: flex; flex-direction: column; }
  .desktop {
    position: relative; flex: 1; min-height: 0; overflow: hidden;
    background:
      radial-gradient(ellipse at 0% 70%, #00b4ff 0 25%, #00b0ff00 65%),
      linear-gradient(95deg, #009df5 0%, #0098f0 25%, #0080e4 55%, #0a52ce 85%, #0a3fb4 100%);
  }
  .icons { display: grid; grid-template: repeat(6, 108px) / 74px 75px 74px; padding-top: 7px; color: #fff; text-align: center; line-height: 15px; text-shadow: 0 1px 2px #003a6d; }
  .icons li { display: flex; flex-direction: column; align-items: center; gap: 3px; padding: 0 5px; }
  .pic { position: relative; }
  .arrow { position: absolute; left: 0; bottom: 1px; }

  .window { position: absolute; display: flex; flex-direction: column; background: #fff; overflow: hidden; }
  .winrar { left: 68px; top: 45px; bottom: 153px; width: 480px; border: 1px solid #56799a; }
  .wr-title { display: flex; align-items: center; gap: 5px; height: 29px; padding-left: 8px; color: #888; }
  .wr-menu { display: flex; gap: 15px; height: 21px; padding-left: 7px; color: #666; border-bottom: 1px solid #e2e2e2; }
  .wr-tools { display: flex; height: 62px; margin-left: 4px; padding-top: 6px; border-left: 2px dotted #c4c4c4; color: #000; }
  .wr-tools button { width: 56px; display: flex; flex-direction: column; align-items: center; justify-content: space-between; height: 52px; }
  .wr-tools button:nth-child(-n + 2) { width: 60px; }
  .wr-addr { display: flex; height: 30px; margin-left: 4px; padding: 2px 0; border-left: 2px dotted #c4c4c4; }
  .wr-up { width: 44px; padding-right: 9px; display: grid; place-items: center; border-right: 2px dotted #c4c4c4; }
  .wr-path { flex: 1; display: flex; align-items: center; gap: 5px; margin: 1px 5px; padding-left: 2px; border: 1px solid #777; }
  .wr-path input { flex: 1; }
  .wr-list { flex: 1; background: #f5f5f5; border: solid #6d7580; border-width: 1px 0; }
  .wr-head { position: relative; height: 25px; padding: 5px 8px; background: #fff; }
  .wr-sort { position: absolute; left: 126px; top: 0; color: #555; }
  .wr-row { display: flex; align-items: center; gap: 2px; height: 19px; padding-left: 6px; }
  .wr-row.sel { background: #ededed; }
  .wr-status { display: flex; align-items: center; gap: 6px; height: 24px; padding: 2px 0 0 4px; background: #f0f0f0; }

  .explorer { left: 312px; top: 36px; right: 182px; bottom: 51px; border: 1px solid #d5eefa; border-top: 0; }
  .title { display: flex; align-items: center; height: 31px; padding-left: 9px; gap: 6px; }
  .bar { width: 1px; height: 13px; background: #999; }
  .caption { display: flex; margin-left: auto; }
  .caption button { width: 46px; height: 30px; display: grid; place-items: center; }
  .tabs { display: flex; height: 24px; border-bottom: 1px solid #dadbdc; }
  .tabs button { width: 56px; }
  .tabs .file { background: #0a62b1; color: #fff; }
  .tabs .on { width: 58px; height: 24px; background: #f5f6f7; border: 1px solid #dadbdc; border-bottom: 0; }
  .tabs .on + button { width: 58px; }
  .tabend { display: flex; align-items: center; gap: 9px; margin-left: auto; padding-right: 3px; color: #999; }
  .ribbon { display: flex; height: 92px; background: #f5f6f7; border-bottom: 1px solid #dadbdc; color: #222; }
  .group { display: flex; flex-direction: column; margin: 3px 0 1px; border-right: 1px solid #e2e3e4; }
  .group p { text-align: center; color: #444; line-height: 16px; }
  .tools { flex: 1; display: flex; }
  .clip { width: 262px; padding-left: 6px; }
  .org { width: 164px; padding-left: 8px; gap: 6px; }
  .new { width: 82px; }
  .opn { width: 133px; padding-left: 2px; }
  .slc { width: 113px; padding-left: 6px; }
  .big { width: 48px; display: flex; flex-direction: column; align-items: center; padding-top: 4px; gap: 3px; white-space: normal; line-height: 13px; }
  .clip .big { width: 42px; }
  .clip .big:first-child { width: 66px; }
  .opn .big { width: 62px; gap: 4px; }
  .off { color: #777; }
  .stack { display: flex; flex-direction: column; padding-top: 1px; }
  .stack button { display: flex; align-items: center; gap: 3px; height: 22px; }
  .clip .stack { padding-left: 4px; }
  .org .stack { padding-top: 9px; gap: 7px; }
  .org .stack + .stack { border-left: 1px solid #e2e3e4; margin: 3px 0; padding: 6px 0 0 5px; }
  .opn .stack button { gap: 2px; }
  .new .stack { padding-left: 1px; }
  .addr { display: flex; align-items: center; height: 35px; padding: 0 12px 2px 13px; }
  .arrows { display: flex; align-items: center; justify-content: space-between; width: 86px; margin-right: 7px; color: #666; }
  .arrows button:first-child { margin-right: 9px; }
  .crumbs { flex: 1; display: flex; align-items: center; gap: 7px; height: 22px; margin-right: 12px; border: 1px solid #d9d9d9; padding-left: 2px; }
  .crumbs .chev { color: #666; }
  .drop { margin-left: auto; }
  .reload { width: 18px; height: 20px; margin-left: -4px; display: grid; place-items: center; border-left: 1px solid #d9d9d9; }
  .search { display: flex; align-items: center; width: 202px; height: 22px; border: 1px solid #d9d9d9; padding: 0 8px; }
  .search input { flex: 1; min-width: 0; }
  .search input::placeholder { color: #666; opacity: 1; }
  .body { flex: 1; display: flex; min-height: 0; }
  .nav { width: 139px; overflow: hidden; }
  .nav li { display: flex; align-items: center; gap: 5px; height: 24px; padding-left: 32px; white-space: nowrap; }
  .nav .deep { padding-left: 40px; }
  .nav .on { background: #d9d9d9; }
  .vbar { width: 15px; display: flex; flex-direction: column; background: #f0f0f0; color: #444; margin-left: 1px; }
  .vbar span { height: 18px; display: grid; place-items: center; }
  .vbar i { flex: 0 0 119px; margin-top: auto; margin-bottom: 78px; background: #cdcdcd; }
  .pane { flex: 1; display: flex; flex-direction: column; justify-content: space-between; min-width: 0; margin-left: 5px; }
  table { width: 100%; table-layout: fixed; border-collapse: separate; border-spacing: 0; }
  .c0 { width: 14px; } .c2 { width: 144px; } .c3 { width: 120px; } .c4 { width: 76px; } .c5 { width: 12px; }
  th, td { padding: 0 0 0 6px; font-weight: 400; text-align: left; white-space: nowrap; height: 21px; overflow: hidden; }
  th { height: 26px; color: #4c607a; }
  th:nth-child(2) { padding-left: 3px; }
  .line { background: linear-gradient(#e5e5e5, #e5e5e5) right / 1px 100% no-repeat; }
  th.line:last-child { background-position: 4px 0; }
  .date { position: relative; }
  .sort { position: absolute; left: 68px; top: -1px; }
  td { color: #6d6d6d; }
  .name { padding-left: 4px; color: #111; }
  .name span { display: flex; align-items: center; gap: 4px; }
  .num { text-align: right; padding-right: 4px; }
  .sel td { height: 22px; }
  .sel td:not(:first-child, :last-child) { background: #cce8ff; border: solid #99d1ff; border-width: 1px 0; }
  .grp td { height: 31px; padding: 0; }
  .grp.first td { height: 33px; padding-top: 2px; }
  .grp div { display: flex; align-items: center; gap: 4px; padding: 0 8px 0 5px; color: #1e3287; font-size: 14px; }
  .grp .chev { color: #444; }
  .grp hr { flex: 1; border: 0; border-top: 1px solid #ddd; margin: 0; }
  .hbar { display: flex; height: 16px; background: #f0f0f0; color: #444; }
  .hbar span { width: 17px; display: grid; place-items: center; }
  .hbar i { flex: 1; background: #cdcdcd; }
  .status { display: flex; align-items: center; height: 24px; padding: 1px 0 0 14px; color: #1e395b; }
  .status span:nth-child(1) { margin-right: 22px; }
  .status span:nth-child(2) { margin-right: 7px; }
  .views { display: flex; margin-left: auto; padding-right: 4px; }
  .views button { width: 22px; height: 24px; display: grid; place-items: center; }
  .views .on { background: #cdeaf8; border: 1px solid #4bb3e3; }
  .chev.up { transform: rotate(180deg); }
  .chev.right { transform: rotate(-90deg); }
  .chev.left { transform: rotate(90deg); }

  .anyrun { position: absolute; right: 48px; bottom: 10px; display: flex; align-items: center; gap: 6px; color: #fff; opacity: .5; font: 300 32px/58px Roboto, 'Liberation Sans', sans-serif; }
  .build { position: absolute; right: 5px; bottom: 0; display: flex; flex-direction: column; text-align: right; color: #fff; line-height: 17px; }

  .context { position: absolute; left: 566px; bottom: 40px; width: 246px; padding: 4px 0; background: #eee; border: 1px solid #a0a0a0; color: #000; }
  .section + .section { background: linear-gradient(#919191, #919191) 10px 3px / 224px 1px no-repeat; padding-top: 7px; }
  .context button { display: flex; align-items: center; width: calc(100% - 4px); height: 22px; margin: 0 2px; padding-left: 8px; }
  .mi { width: 24px; }
  .bold { font-weight: 700; }
  .context .hot { background: #fff; }
  .sub { margin-left: auto; margin-right: 8px; }

  .taskbar { flex: none; display: flex; height: 40px; background: linear-gradient(90deg, #00141c, #000f1b 50%, #000b1c); color: #fff; }
  .start { width: 48px; display: grid; place-items: center; }
  .find { width: 288px; display: flex; align-items: center; gap: 9px; padding: 2px 0 0 12px; background: #f2f2f2; border: 1px solid #c4c4c4; }
  .find input { flex: 1; min-width: 0; font-size: 14px; }
  .find input::placeholder { color: #333; opacity: 1; }
  .task { width: 48px; margin-right: 1px; display: grid; place-items: center; }
  .find + .task { margin-right: 3px; }
  .open { background: linear-gradient(#76b9ed, #76b9ed) center bottom / 40px 3px no-repeat; }
  .open.active { background: linear-gradient(#76b9ed, #76b9ed) center bottom / 48px 3px no-repeat, #33454f; }
  .tray { display: flex; align-items: center; gap: 8px; margin-left: auto; margin-right: 4px; padding-right: 19px; border-right: 1px solid #56606c; }
  .tray svg:first-child { margin-right: 4px; }
  time { display: flex; flex-direction: column; text-align: center; line-height: 18px; margin-right: 10px; }
</style>
